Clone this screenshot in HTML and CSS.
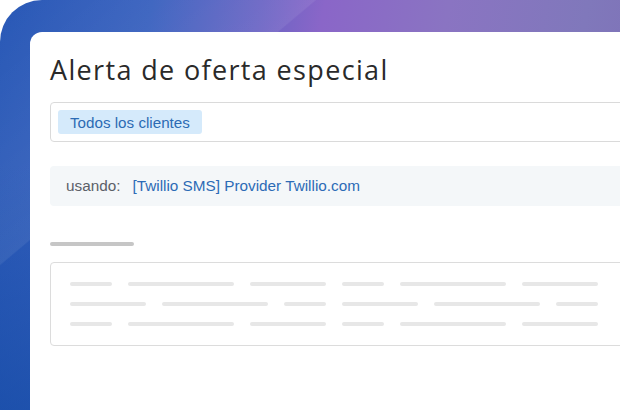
FILE: index.html
```html
<!DOCTYPE html>
<html lang="es">
<head>
<meta charset="utf-8">
<title>Alerta de oferta especial</title>
<link rel="stylesheet" href="styles.css">
</head>
<body>
<div class="frame">
  <div class="card">
    <h1 class="title">Alerta de oferta especial</h1>
    <div class="input">
      <span class="tag">Todos los clientes</span>
    </div>
    <div class="using">
      <span class="using-label">usando:</span>
      <span class="using-value">[Twillio SMS] Provider Twillio.com</span>
    </div>
    <div class="bar"></div>
    <div class="box">
      <div class="row">
        <span class="seg w42"></span><span class="seg w106"></span><span class="seg w76"></span><span class="seg w42"></span><span class="seg w106"></span><span class="seg w76"></span>
      </div>
      <div class="row">
        <span class="seg w76"></span><span class="seg w106"></span><span class="seg w42"></span><span class="seg w76"></span><span class="seg w106"></span><span class="seg w42"></span>
      </div>
      <div class="row">
        <span class="seg w42"></span><span class="seg w106"></span><span class="seg w76"></span><span class="seg w42"></span><span class="seg w106"></span><span class="seg w76"></span>
      </div>
    </div>
  </div>
</div>
</body>
</html>
```

FILE: styles.css
```css
html, body {
  margin: 0;
  padding: 0;
  background: #ffffff;
}

.frame {
  width: 620px;
  height: 410px;
  box-sizing: border-box;
  padding: 32px 0 0 30px;
  border-top-left-radius: 42px;
  overflow: hidden;
  background:
    linear-gradient(140deg, rgba(255,255,255,0) 0%, rgba(255,255,255,0.05) 20%, rgba(255,255,255,0.07) 28.4%, rgba(255,255,255,0) 28.6%),
    linear-gradient(180deg, rgba(20,70,160,0) 40%, rgba(12,70,160,0.55) 100%),
    linear-gradient(100deg, #2858b6 0%, #3a62bf 22%, #6a64c4 38%, #8a66c8 47%, #8a74c2 65%, #8078bb 85%, #7e70b6 100%);
}

.card {
  height: 100%;
  box-sizing: border-box;
  background: #ffffff;
  border-top-left-radius: 12px;
  padding: 20px 0 0 20px;
  overflow: hidden;
}

.title {
  margin: 0 0 14px 0;
  font-family: "Open Sans", "Liberation Sans", sans-serif;
  font-weight: 400;
  font-size: 27px;
  line-height: 36px;
  letter-spacing: 1.35px;
  color: #2a2a2a;
  white-space: nowrap;
}

.input {
  width: 620px;
  height: 40px;
  box-sizing: border-box;
  border: 1px solid #dadada;
  border-radius: 4px;
  padding: 7px;
  display: flex;
  align-items: center;
}

.tag {
  height: 24px;
  display: flex;
  align-items: center;
  padding: 0 12px;
  background: #d5eafb;
  border-radius: 3px;
  font-family: "Liberation Sans", Arial, sans-serif;
  font-size: 15.2px;
  color: #2c6bb4;
  white-space: nowrap;
}

.using {
  margin-top: 24px;
  width: 620px;
  height: 40px;
  box-sizing: border-box;
  padding-left: 16px;
  background: #f4f7f9;
  border-radius: 4px;
  display: flex;
  align-items: center;
  gap: 12px;
  font-family: "Liberation Sans", Arial, sans-serif;
  font-size: 15.3px;
  white-space: nowrap;
}

.using-label {
  color: #5b6068;
}

.using-value {
  color: #2c6bb6;
}

.bar {
  margin-top: 36px;
  width: 84px;
  height: 4px;
  border-radius: 2px;
  background: #c6c6c6;
}

.box {
  margin-top: 16px;
  width: 620px;
  height: 84px;
  box-sizing: border-box;
  border: 1px solid #dcdcdc;
  border-radius: 4px;
  padding: 19px 19px;
  display: flex;
  flex-direction: column;
  gap: 16px;
}

.row {
  display: flex;
  gap: 16px;
  height: 4px;
}

.seg {
  height: 4px;
  border-radius: 2px;
  background: #e7e7e7;
  flex: none;
}

.w42 { width: 42px; }
.w76 { width: 76px; }
.w106 { width: 106px; }
```
